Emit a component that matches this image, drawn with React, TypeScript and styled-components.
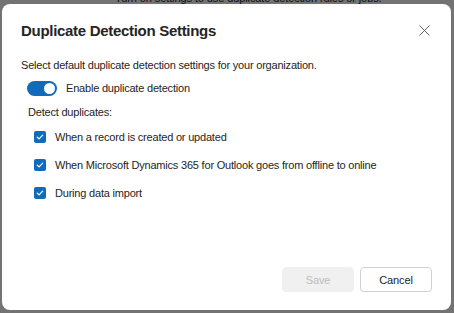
import React from "react";
import styled, { createGlobalStyle } from "styled-components";

const Global = createGlobalStyle`
  html, body { margin: 0; padding: 0; background: #ffffff; }
  body { font-family: "Segoe UI", "Liberation Sans", Arial, sans-serif; color: #242424; }
  * { box-sizing: border-box; }
`;

const Page = styled.div`
  width: 454px;
  height: 313px;
  overflow: hidden;
`;

const BehindText = styled.div`
  margin: -8px 0 0 115px;
  font-size: 11px;
  letter-spacing: -0.1px;
  line-height: 13px;
  color: #242424;
`;

const Backdrop = styled.div`
  position: fixed;
  inset: 0;
  background: rgba(0, 0, 0, 0.55);
  padding: 4px 3px 3px 2px;
  display: flex;
`;

const Dialog = styled.div`
  flex: 1;
  background: #ffffff;
  border-radius: 8px;
  padding: 17px 19px 18px 19px;
  display: flex;
  flex-direction: column;
`;

const Header = styled.div`
  display: flex;
  align-items: center;
  justify-content: space-between;
  height: 20px;
`;

const Title = styled.h2`
  margin: 0;
  font-size: 15px;
  letter-spacing: -0.3px;
  font-weight: 600;
  line-height: 20px;
  color: #242424;
`;

const CloseButton = styled.button`
  border: none;
  background: transparent;
  padding: 0;
  width: 14px;
  height: 14px;
  margin: -1px 1px 0 0;
  display: flex;
  align-items: center;
  justify-content: center;
  cursor: pointer;
`;

const Body = styled.div`
  flex: 1;
  display: flex;
  flex-direction: column;
  margin-top: 16px;
  font-size: 11px;
  letter-spacing: -0.2px;
  line-height: 16px;
`;

const Description = styled.p`
  margin: 0;
`;

const SwitchRow = styled.label`
  display: flex;
  align-items: center;
  gap: 9px;
  margin: 7px 0 0 6px;
  height: 16px;
`;

const SwitchTrack = styled.span<{ $on: boolean }>`
  width: 30px;
  height: 15px;
  border-radius: 8px;
  background: ${(p) => (p.$on ? "#0f6cbd" : "#ffffff")};
  display: flex;
  align-items: center;
  justify-content: ${(p) => (p.$on ? "flex-end" : "flex-start")};
  padding: 0 2px;
`;

const SwitchThumb = styled.span`
  width: 11px;
  height: 11px;
  border-radius: 50%;
  background: #ffffff;
`;

const GroupLabel = styled.div`
  margin: 8px 0 0 7px;
`;

const CheckList = styled.div`
  display: flex;
  flex-direction: column;
  gap: 12px;
  margin: 9px 0 0 13px;
`;

const CheckRow = styled.label`
  display: flex;
  align-items: center;
  gap: 9px;
  height: 16px;
`;

const CheckBox = styled.span`
  width: 12px;
  height: 12px;
  border-radius: 2px;
  background: #0f6cbd;
  display: flex;
  align-items: center;
  justify-content: center;
`;

const Footer = styled.div`
  display: flex;
  justify-content: flex-end;
  gap: 6px;
`;

const Button = styled.button<{ $disabled?: boolean }>`
  width: 72px;
  height: 25px;
  border-radius: 4px;
  font-family: inherit;
  font-size: 11px;
  letter-spacing: -0.1px;
  border: 1px solid ${(p) => (p.$disabled ? "#f0f0f0" : "#d1d1d1")};
  background: ${(p) => (p.$disabled ? "#f0f0f0" : "#ffffff")};
  color: ${(p) => (p.$disabled ? "#bdbdbd" : "#242424")};
  padding: 0;
`;

const Check = () => (
  <svg width="8" height="8" viewBox="0 0 8 8">
    <path d="M1.3 4.2 L3.1 5.9 L6.7 2.2" fill="none" stroke="#fff" strokeWidth="1.2" strokeLinecap="round" strokeLinejoin="round" />
  </svg>
);

const items = [
  "When a record is created or updated",
  "When Microsoft Dynamics 365 for Outlook goes from offline to online",
  "During data import",
];

export default function App() {
  return (
    <Page>
      <Global />
      <BehindText>Turn on settings to use duplicate detection rules or jobs.</BehindText>
      <Backdrop>
        <Dialog>
          <Header>
            <Title>Duplicate Detection Settings</Title>
            <CloseButton aria-label="Close">
              <svg width="11" height="11" viewBox="0 0 11 11">
                <path d="M0.5 0.5 L10.5 10.5 M10.5 0.5 L0.5 10.5" stroke="#616161" strokeWidth="1" />
              </svg>
            </CloseButton>
          </Header>
          <Body>
            <Description>Select default duplicate detection settings for your organization.</Description>
            <SwitchRow>
              <SwitchTrack $on>
                <SwitchThumb />
              </SwitchTrack>
              Enable duplicate detection
            </SwitchRow>
            <GroupLabel>Detect duplicates:</GroupLabel>
            <CheckList>
              {items.map((t) => (
                <CheckRow key={t}>
                  <CheckBox>
                    <Check />
                  </CheckBox>
                  {t}
                </CheckRow>
              ))}
            </CheckList>
          </Body>
          <Footer>
            <Button $disabled>Save</Button>
            <Button>Cancel</Button>
          </Footer>
        </Dialog>
      </Backdrop>
    </Page>
  );
}
